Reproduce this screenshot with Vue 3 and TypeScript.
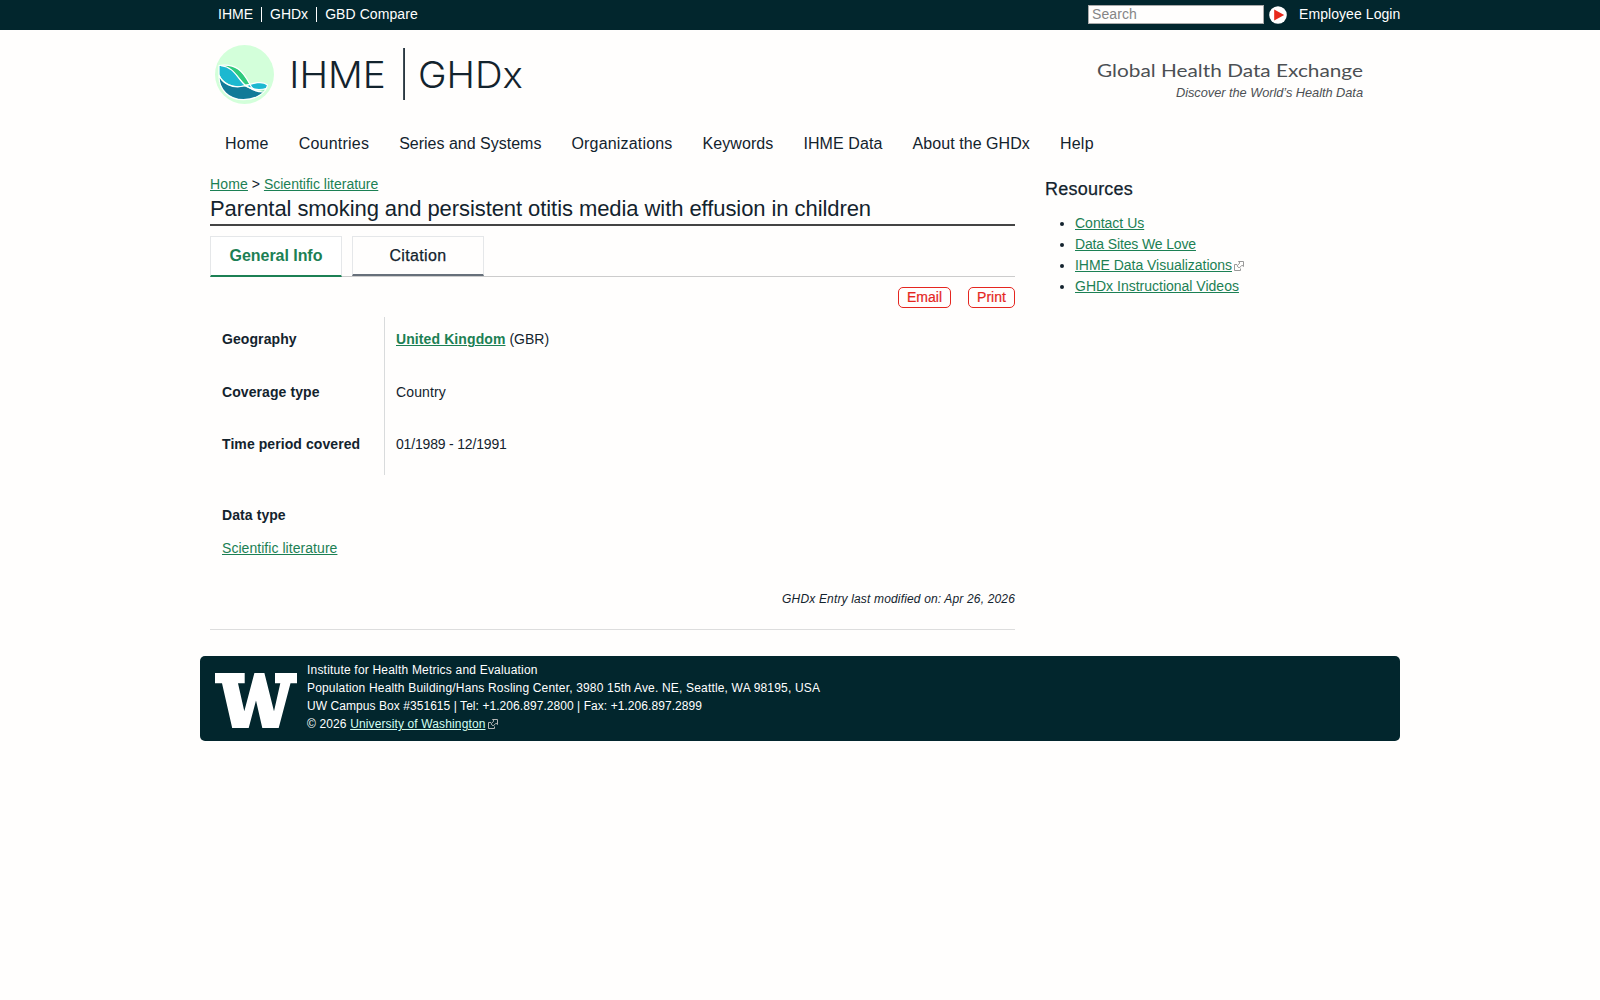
<script setup lang="ts">
interface Item { label: string; ls: number; external?: boolean }

const topLinks: Item[] = [
  { label: 'IHME', ls: 0 },
  { label: 'GHDx', ls: 0 },
  { label: 'GBD Compare', ls: 0.08 },
]
const nav: Item[] = [
  { label: 'Home', ls: 0.25 },
  { label: 'Countries', ls: 0.22 },
  { label: 'Series and Systems', ls: 0 },
  { label: 'Organizations', ls: 0.18 },
  { label: 'Keywords', ls: 0.08 },
  { label: 'IHME Data', ls: 0.1 },
  { label: 'About the GHDx', ls: 0.06 },
  { label: 'Help', ls: 0.25 },
]
const resources: Item[] = [
  { label: 'Contact Us', ls: 0 },
  { label: 'Data Sites We Love', ls: -0.14 },
  { label: 'IHME Data Visualizations', ls: -0.03, external: true },
  { label: 'GHDx Instructional Videos', ls: 0 },
]
const sp = (n: number) => ({ letterSpacing: n + 'px' })
</script>

<template>
  <div class="page">
    <header class="topbar">
      <div class="wrap topbar-in">
        <nav class="toplinks">
          <a v-for="l in topLinks" :key="l.label"><span :style="sp(l.ls)">{{ l.label }}</span></a>
        </nav>
        <div class="tools">
          <input class="search" placeholder="Search" />
          <svg class="go" width="18" height="18" viewBox="0 0 18 18"><circle cx="9" cy="9" r="8.8" fill="#fff" /><path d="M5.2 3.6 15.2 9 5.2 14.4z" fill="#e8291c" /></svg>
          <a class="login">Employee Login</a>
        </div>
      </div>
    </header>

    <div class="wrap brand">
      <svg class="logo" width="320" height="70" viewBox="210 40 320 70">
        <circle cx="244.5" cy="74.5" r="29.5" fill="#d3ffda" />
        <path d="M219 76C222 84 232 89 244 86C249 88 254 91 263 92.500C258 97 251 99.500 243.500 99.500C229 99.500 219 90 219 76Z" fill="#127a98" />
        <path d="M219 66C224 65 230 67 235 73C239 78 241 82 244.500 85C234 89 223 83 219 74Z" fill="#1cb8d0" />
        <path d="M221 65.600C236 64 242 71 249.500 84L245 84.500C237 76 234 68 221 65.600Z" fill="#31ca7e" />
        <path d="M247 86C253 83 262 81 267.500 85.300C267 88 264 89.700 259 89.700C254 89.500 251 88 247 86Z" fill="#1cb8d0" />
        <path d="M257 91.300L265 90.600L263.500 92.600Z" fill="#31ca7e" />
        <g fill="none" stroke="#fff" stroke-width="1.200" stroke-linejoin="round">
          <path d="M219 75C222 83 232 89 244 86C251 84 262 80 267.500 85C266 93 256 99.700 243.500 99.700C229 99.700 218.500 90 219 75V65.500C236 63 243 71 250 84.500C251 87 252 88 254 89.300" />
          <path d="M221 65.600C234 67 237 78 245 85C250 89.500 259 90.500 266.500 88.500M250 88C254 91 259 92 264 92" />
        </g>
        <g class="wordmark" fill="#13232d">
          <text x="289.300" y="88" font-size="37" textLength="96.500" lengthAdjust="spacingAndGlyphs">IHME</text>
          <rect x="403.200" y="48" width="1.700" height="52" />
          <text x="418" y="88" font-size="37" textLength="105" lengthAdjust="spacingAndGlyphs">GHDx</text>
        </g>
      </svg>
      <svg class="tagline" width="270" height="50" viewBox="1095 55 270 50" fill="#4c5054">
        <text class="tag-main" x="1097" y="77.200" font-size="18" textLength="266" lengthAdjust="spacingAndGlyphs">Global Health Data Exchange</text>
        <text class="tag-sub" x="1176" y="97.200" font-size="12.800" textLength="187" lengthAdjust="spacing">Discover the World’s Health Data</text>
      </svg>
    </div>

    <nav class="wrap mainnav">
      <a v-for="n in nav" :key="n.label" :style="sp(n.ls)">{{ n.label }}</a>
    </nav>

    <div class="wrap columns">
      <main class="content">
        <div class="crumbs"><a class="link c1">Home</a> <span class="gt">&gt;</span> <a class="link">Scientific literature</a></div>
        <h1>Parental smoking and persistent otitis media with effusion in children</h1>
        <div class="tabs">
          <a class="tab active">General Info</a>
          <a class="tab">Citation</a>
        </div>
        <div class="actions"><a class="email">Email</a><a class="print">Print</a></div>
        <dl class="facts">
          <div class="row"><dt>Geography</dt><dd><a class="link uk">United Kingdom</a> (GBR)</dd></div>
          <div class="row"><dt>Coverage type</dt><dd class="country">Country</dd></div>
          <div class="row"><dt>Time period covered</dt><dd class="period">01/1989 - 12/1991</dd></div>
        </dl>
        <section class="datatype">
          <h3>Data type</h3>
          <a class="link lit">Scientific literature</a>
        </section>
        <p class="modified">GHDx Entry last modified on: Apr 26, 2026</p>
      </main>
      <aside class="side">
        <h2>Resources</h2>
        <ul>
          <li v-for="r in resources" :key="r.label"><a class="link" :style="sp(r.ls)">{{ r.label }}</a><svg v-if="r.external" class="ext" width="10" height="10" viewBox="0 0 10 10" fill="none" stroke="#999"><path d="M3 3.500H.5v6h6V7.500M4.500.5h5v5L8 4.200 5.200 7 3 4.800 5.900 2z" /></svg></li>
        </ul>
      </aside>
    </div>

    <footer class="wrap footer">
      <svg class="uw" width="82" height="56" viewBox="0 0 82 56"><path d="M0 0H29.700V10.200H23L29.300 38.300 39.400 0H49.400L59 38.300 65.300 10.200H60V0H82V10.200H75.500L63.700 55H47.300L41 27.500 33.700 55H17.200L7 10.200H0z" fill="#fff" /></svg>
      <div class="address">
        <div class="a1">Institute for Health Metrics and Evaluation</div>
        <div class="a2">Population Health Building/Hans Rosling Center, 3980 15th Ave. NE, Seattle, WA 98195, USA</div>
        <div class="a3">UW Campus Box #351615 | Tel: +1.206.897.2800 | Fax: +1.206.897.2899</div>
        <div class="a4">© 2026 <a>University of Washington</a><svg class="ext" width="10" height="10" viewBox="0 0 10 10" fill="none" stroke="#b5b5b5"><path d="M3 3.500H.5v6h6V7.500M4.500.5h5v5L8 4.200 5.200 7 3 4.800 5.900 2z" /></svg></div>
      </div>
    </footer>
  </div>
</template>

<style>
html, body { background: #fffefd; }
</style>

<style scoped>
.page { min-height: 1000px; font: 14px/21px "Liberation Sans", Arial, sans-serif; color: #13232d; background: #fffefd; white-space: nowrap; }
.wrap { width: 1200px; margin: 0 auto; box-sizing: border-box; }
.link { color: #1c8054; text-decoration: underline; text-underline-offset: 1px; text-decoration-thickness: 1px; }
.topbar { height: 30px; background: #02262d; color: #fff; }
.topbar-in { height: 30px; display: flex; justify-content: space-between; }
.toplinks { display: flex; padding-left: 10px; align-items: center; height: 28px; }
.toplinks a { padding: 0 8px; line-height: 15px; border-left: 1px solid #fff; }
.toplinks a:first-child { border-left: 0; }
.tools { display: flex; align-items: center; height: 29px; }
.search { box-sizing: border-box; width: 176px; height: 19px; border: 1px solid #aaa; padding: 0 3px 2px; font: 14px "Liberation Sans", sans-serif; letter-spacing: .1px; background: #fffefd; border-radius: 0; outline: 0; }
.search::placeholder { color: #858585; opacity: 1; }
.go { margin: 0 12px 0 5px; }
.login { width: 101px; letter-spacing: .07px; }
.brand { height: 96px; display: flex; justify-content: space-between; padding: 10px 35px 0 10px; }
.wordmark { font-family: Inter, sans-serif; font-weight: 300; }
.tagline { margin-top: 15px; }
.tag-main { font-family: Lato, sans-serif; }
.tag-sub { font-family: "Liberation Sans", sans-serif; font-style: italic; }
.mainnav { display: flex; height: 49px; padding-left: 10px; font-size: 16px; line-height: 35px; }
.mainnav a { padding: 0 15px; }
.columns { display: flex; justify-content: space-between; padding: 0 10px; height: 481px; }
.content { width: 805px; }
.crumbs { line-height: 18px; height: 19px; }
.c1 { letter-spacing: .15px; }
h1 { margin: 0; font-size: 22px; font-weight: 400; line-height: 30px; height: 30px; letter-spacing: -.072px; border-bottom: 2px solid #444; }
.tabs { display: flex; gap: 10px; height: 40px; margin-top: 10px; border-bottom: 1px solid #ccc; }
.tab { box-sizing: border-box; width: 132px; height: 40px; border: 1px solid #e5e7e9; border-bottom: 2px solid #67707a; text-align: center; font-size: 16px; line-height: 38px; letter-spacing: .35px; -webkit-text-stroke: .25px; }
.tab.active { height: 41px; background: #fff; border-bottom-color: #1c8054; color: #1c8054; font-weight: 700; letter-spacing: -.05px; -webkit-text-stroke: 0; }
.actions { display: flex; justify-content: flex-end; gap: 17px; margin-top: 10px; height: 30px; color: #e5261f; }
.actions a { box-sizing: border-box; height: 21px; border: 1px solid #e5261f; border-radius: 5px; line-height: 19px; text-align: center; -webkit-text-stroke: .2px; }
.email { width: 53px; }
.print { width: 47px; }
.facts { margin: 0; }
.row { display: flex; height: 52.670px; }
dt { box-sizing: border-box; width: 175px; padding: 12px 0 0 12px; font-weight: 700; letter-spacing: .08px; border-right: 1px solid #d9dbdc; }
dd { margin: 0; padding: 12px 0 0 11px; }
.uk { font-weight: 700; letter-spacing: .1px; }
.country { letter-spacing: .14px; }
.period { letter-spacing: -.18px; }
.datatype { padding: 30px 0 0 12px; height: 116px; box-sizing: border-box; }
h3 { margin: 0 0 12px; font-size: 14px; line-height: 21px; letter-spacing: .08px; }
.lit { letter-spacing: .05px; }
.modified { margin: 0; height: 38px; border-bottom: 1px solid #ddd; text-align: right; font-size: 12px; line-height: 16px; font-style: italic; letter-spacing: .16px; }
.side { width: 345px; }
h2 { margin: 4px 0 0; font-size: 18px; font-weight: 400; line-height: 20px; letter-spacing: .22px; -webkit-text-stroke: .25px; }
ul { margin: 14px 0 0; padding: 0 0 0 30px; }
.ext { margin-left: 2px; vertical-align: -1px; }
.footer { height: 85px; border-radius: 5px; background: #02262d; color: #fff; display: flex; padding: 5px 15px; font-size: 12px; line-height: 18px; }
.uw { margin: 12px 10px 0 0; }
.footer a { color: #d3fff2; text-decoration: underline; text-underline-offset: 1px; }
.a1 { letter-spacing: .2px; }
.a2 { letter-spacing: .174px; }
.a3 { letter-spacing: .06px; }
.a4 { letter-spacing: .13px; }
</style>
